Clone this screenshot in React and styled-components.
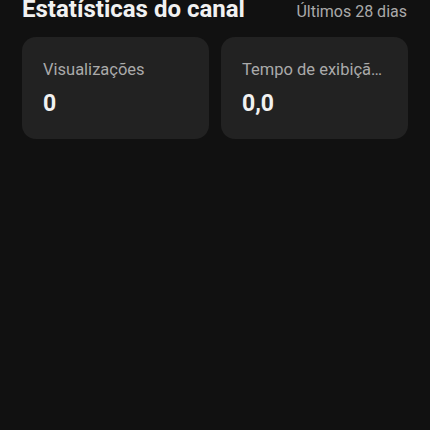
import React from "react";
import styled, { createGlobalStyle } from "styled-components";

const Global = createGlobalStyle`
  html, body {
    margin: 0;
    padding: 0;
    background: #111111;
  }
  body {
    font-family: Roboto, "Liberation Sans", sans-serif;
    color: #f1f1f1;
    -webkit-font-smoothing: antialiased;
  }
`;

const Page = styled.div`
  width: 430px;
  height: 430px;
  background: #111111;
  padding: 0 22px;
  box-sizing: border-box;
  overflow: hidden;
`;

const Header = styled.div`
  display: flex;
  justify-content: space-between;
  align-items: baseline;
  margin-top: -5px;
`;

const Title = styled.h2`
  margin: 0;
  font-size: 24px;
  line-height: 28px;
  font-weight: 700;
  color: #f1f1f1;
`;

const Period = styled.span`
  font-size: 16px;
  line-height: 20px;
  color: #aaaaaa;
  padding-right: 1px;
`;

const Grid = styled.div`
  display: grid;
  grid-template-columns: 1fr 1fr;
  gap: 12px;
  margin-top: 14px;
`;

const Card = styled.div`
  background: #222222;
  border-radius: 14px;
  height: 102px;
  box-sizing: border-box;
  padding: 23px 21px 21px;
  display: flex;
  flex-direction: column;
  gap: 10px;
  min-width: 0;
`;

const Label = styled.div`
  font-size: 16.5px;
  line-height: 20px;
  color: #aaaaaa;
  white-space: nowrap;
  overflow: hidden;
  text-overflow: ellipsis;
`;

const Value = styled.div`
  font-size: 23px;
  line-height: 28px;
  font-weight: 700;
  color: #f1f1f1;
`;

const stats = [
  { label: "Visualizações", value: "0" },
  { label: "Tempo de exibição (horas)", value: "0,0" },
];

export default function App() {
  return (
    <>
      <Global />
      <Page>
        <Header>
          <Title>Estatísticas do canal</Title>
          <Period>Últimos 28 dias</Period>
        </Header>
        <Grid>
          {stats.map((s) => (
            <Card key={s.label}>
              <Label>{s.label}</Label>
              <Value>{s.value}</Value>
            </Card>
          ))}
        </Grid>
      </Page>
    </>
  );
}
